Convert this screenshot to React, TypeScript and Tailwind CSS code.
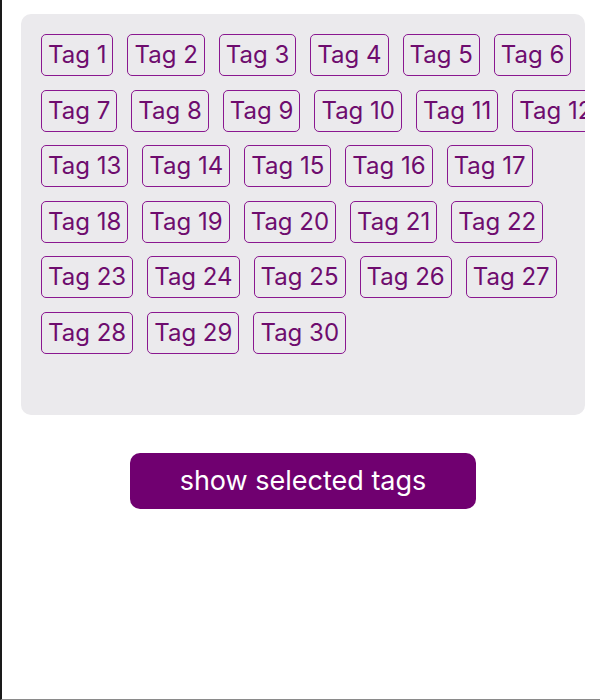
import React from "react";

const rows: number[][] = [
  [1, 2, 3, 4, 5, 6],
  [7, 8, 9, 10, 11, 12],
  [13, 14, 15, 16, 17],
  [18, 19, 20, 21, 22],
  [23, 24, 25, 26, 27],
  [28, 29, 30],
];

function Tag({ n }: { n: number }) {
  return (
    <div className="shrink-0 h-[42px] px-[6px] flex items-center rounded-[5px] border-[1.5px] border-[#8a1890] text-[24px] leading-none text-[#6e0c6e] whitespace-nowrap">
      Tag {n}
    </div>
  );
}

export default function App() {
  return (
    <div
      className="h-[700px] w-[600px] bg-white border-l-2 border-l-[#1a1a1a] border-b border-b-[#8a8a8a] flex flex-col"
      style={{ fontFamily: 'Inter, "Liberation Sans", Arial, sans-serif' }}
    >
      <div className="mt-[14px] ml-[19px] mr-[15px] h-[401px] rounded-[10px] bg-[#ebeaed] overflow-hidden pt-[20px] pl-[20px] flex flex-col gap-y-[13.5px]">
        {rows.map((row, i) => (
          <div key={i} className="flex gap-x-[14px]">
            {row.map((n) => (
              <Tag key={n} n={n} />
            ))}
          </div>
        ))}
      </div>
      <div className="ml-[19px] mr-[15px] mt-[38px] flex justify-center">
        <button className="w-[346px] h-[56px] rounded-[10px] bg-[#700070] text-white text-[27px]">
          show selected tags
        </button>
      </div>
    </div>
  );
}
